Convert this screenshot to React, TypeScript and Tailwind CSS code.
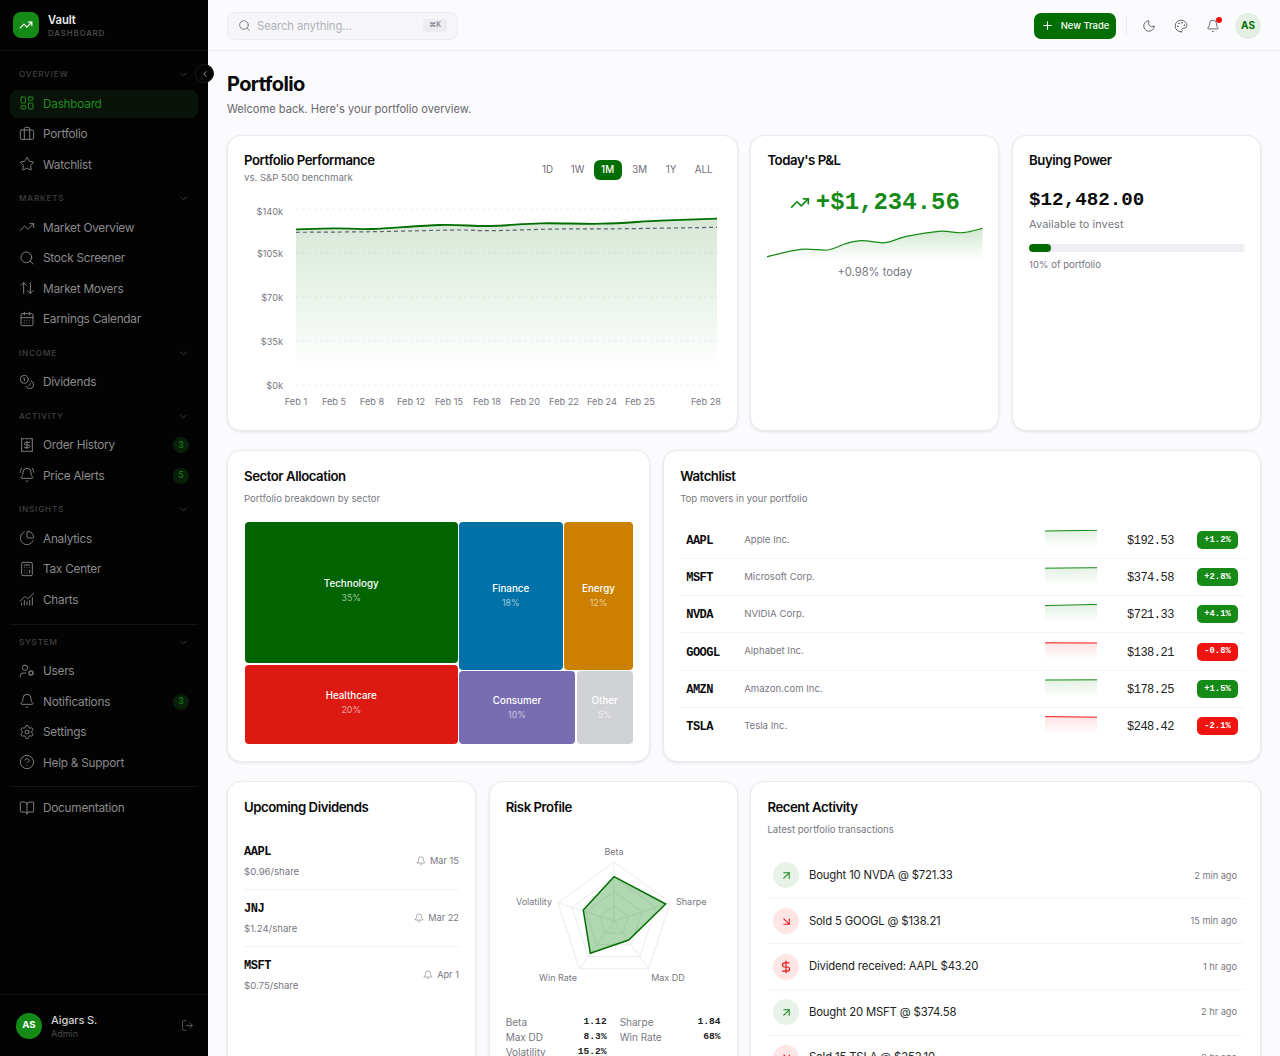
import {
  ArrowDownRight,
  ArrowUpDown,
  ArrowUpRight,
  Bell,
  BellRing,
  BookOpen,
  Briefcase,
  Calculator,
  CalendarDays,
  ChartNoAxesCombined,
  ChartPie,
  ChevronDown,
  ChevronLeft,
  CircleHelp,
  Coins,
  DollarSign,
  LayoutDashboard,
  LogOut,
  Moon,
  Palette,
  Plus,
  Receipt,
  Search,
  Settings,
  Star,
  TrendingUp,
  UserCog,
} from "lucide-react";
import type { ReactNode } from "react";

type Pt = [number, number];

const mono = "[font-family:'Liberation_Mono',monospace]";

// catmull-rom line through page-coordinate points
const smooth = (pts: Pt[]) =>
  pts
    .map((p, i) => {
      if (i === 0) return `M${p[0]} ${p[1]}`;
      const p0 = pts[i - 2] ?? pts[i - 1];
      const p1 = pts[i - 1];
      const p3 = pts[i + 1] ?? p;
      const c1x = p1[0] + (p[0] - p0[0]) / 6;
      const c1y = p1[1] + (p[1] - p0[1]) / 6;
      const c2x = p[0] - (p3[0] - p1[0]) / 6;
      const c2y = p[1] - (p3[1] - p1[1]) / 6;
      return `C${c1x} ${c1y} ${c2x} ${c2y} ${p[0]} ${p[1]}`;
    })
    .join(" ");

const navSections = [
  {
    title: "OVERVIEW",
    items: [
      { label: "Dashboard", icon: LayoutDashboard, active: true },
      { label: "Portfolio", icon: Briefcase },
      { label: "Watchlist", icon: Star },
    ],
  },
  {
    title: "MARKETS",
    items: [
      { label: "Market Overview", icon: TrendingUp },
      { label: "Stock Screener", icon: Search },
      { label: "Market Movers", icon: ArrowUpDown },
      { label: "Earnings Calendar", icon: CalendarDays },
    ],
  },
  { title: "INCOME", items: [{ label: "Dividends", icon: Coins }] },
  {
    title: "ACTIVITY",
    items: [
      { label: "Order History", icon: Receipt, badge: "3" },
      { label: "Price Alerts", icon: BellRing, badge: "5" },
    ],
  },
  {
    title: "INSIGHTS",
    items: [
      { label: "Analytics", icon: ChartPie },
      { label: "Tax Center", icon: Calculator },
      { label: "Charts", icon: ChartNoAxesCombined },
    ],
  },
];

const systemItems = [
  { label: "Users", icon: UserCog },
  { label: "Notifications", icon: Bell, badge: "3" },
  { label: "Settings", icon: Settings },
  { label: "Help & Support", icon: CircleHelp },
];

const NavItem = ({ item }: { item: any }) => {
  const Icon = item.icon;
  return (
    <div
      className={`flex h-[28.5px] items-center gap-2 rounded-lg pl-[9px] pr-[9px] text-[11.8px] ${
        item.active ? "bg-[#0a130a] text-[#1c8c1c]" : "text-[#8a8a8a]"
      }`}
    >
      <Icon size={16} strokeWidth={1.5} className={`-mt-[1px] ${item.active ? "text-[#1c8c1c]" : "text-[#7e7e7e]"}`} />
      <span className="flex-1 pt-[2px] tracking-[-0.25px]">{item.label}</span>
      {item.badge && (
        <span className="flex h-4 w-4 items-center justify-center rounded-full bg-[#0a1f0a] text-[8.5px] font-semibold text-[#167516]">
          {item.badge}
        </span>
      )}
    </div>
  );
};

const SectionHeader = ({ title }: { title: string }) => (
  <div className="flex h-4 items-center justify-between pl-[9px] pr-[9px]">
    <span className="text-[8.2px] font-medium tracking-[0.8px] text-[#404040]">{title}</span>
    <ChevronDown size={11} className="text-[#404040]" />
  </div>
);

const Sidebar = () => (
  <aside className="relative flex h-full w-[208px] shrink-0 flex-col bg-[#030303]">
    <div className="flex h-[51px] items-center gap-[9px] border-b border-[#111111] pl-[13px]">
      <div className="flex h-[26px] w-[26px] items-center justify-center rounded-lg bg-[#168a16]">
        <TrendingUp size={14} className="text-white" />
      </div>
      <div className="pt-[2px]">
        <div className="text-[11.2px] font-semibold leading-[14px] text-[#eeeeee]">Vault</div>
        <div className="text-[8px] font-medium leading-[12px] tracking-[0.8px] text-[#505050]">DASHBOARD</div>
      </div>
    </div>
    <div className="absolute left-[195px] top-[64px] flex h-[19px] w-[19px] items-center justify-center rounded-full border border-[#1a1a1a] bg-[#030303]">
      <ChevronLeft size={10} className="text-[#b0b0b0]" />
    </div>
    <nav className="flex flex-1 flex-col px-[10px] pt-[15.5px]">
      <div className="flex flex-col gap-[11.5px]">
        {navSections.map((s) => (
          <div key={s.title}>
            <SectionHeader title={s.title} />
            <div className="mt-[7px] flex flex-col gap-[2px]">
              {s.items.map((i) => (
                <NavItem key={i.label} item={i} />
              ))}
            </div>
          </div>
        ))}
      </div>
      <div className="my-[9.5px] h-px bg-[#141414]" />
      <SectionHeader title="SYSTEM" />
      <div className="mt-[7px] flex flex-col gap-[2px]">
        {systemItems.map((i) => (
          <NavItem key={i.label} item={i} />
        ))}
      </div>
      <div className="mb-[7px] mt-[9px] h-px bg-[#141414]" />
      <NavItem item={{ label: "Documentation", icon: BookOpen }} />
    </nav>
    <div className="flex h-[62px] items-center gap-[9px] border-t border-[#111111] pl-4 pr-[14px]">
      <div className="flex h-[26px] w-[26px] items-center justify-center rounded-full bg-[#168a16] text-[9.6px] font-bold text-white">
        AS
      </div>
      <div className="flex-1 pt-[1px]">
        <div className="text-[11px] font-medium leading-[15px] tracking-[-0.1px] text-[#d0d0d0]">Aigars S.</div>
        <div className="text-[9px] leading-[12px] text-[#4a4a4a]">Admin</div>
      </div>
      <LogOut size={13} strokeWidth={1.5} className="text-[#666666]" />
    </div>
  </aside>
);

const Topbar = () => (
  <header className="flex h-[51px] shrink-0 items-center border-b border-[#ececf0] bg-[#fbfbfd] pl-[19px] pr-[19px] pt-[1px]">
    <div className="flex h-[28px] w-[231px] items-center rounded-lg border border-[#ebebf0] bg-[#f6f6f9] pl-[10px] pr-[10px]">
      <Search size={13} strokeWidth={1.5} className="text-[#6b6b73]" />
      <span className="ml-[6px] flex-1 pt-[2px] text-[11.3px] tracking-[-0.1px] text-[#b0b0b8]">Search anything...</span>
      <span className="rounded bg-[#ececf1] px-[6px] py-[1px] text-[7px] font-medium text-[#77777f]">⌘K</span>
    </div>
    <div className="flex-1" />
    <button className="flex h-[26px] w-[82px] items-center justify-center gap-[7px] rounded-[7px] bg-[#006e00] text-[9.4px] font-medium text-white">
      <Plus size={13} />
      <span className="pt-[2px]">New Trade</span>
    </button>
    <div className="ml-[10px] h-5 w-px bg-[#ececf0]" />
    <div className="ml-[15px] flex items-center gap-[18px] text-[#55555c]">
      <Moon size={14} strokeWidth={1.5} />
      <Palette size={14} strokeWidth={1.5} />
      <div className="relative">
        <Bell size={14} strokeWidth={1.5} />
        <span className="absolute -right-[2px] -top-[2px] h-[6px] w-[6px] rounded-full bg-[#f01010]" />
      </div>
    </div>
    <div className="ml-[15px] flex h-[26px] w-[26px] items-center justify-center rounded-full bg-[#e5f0e5] text-[10px] font-bold text-[#006e00]">
      AS
    </div>
  </header>
);

const Card = ({ className, children }: { className: string; children: ReactNode }) => (
  <div className={`rounded-[14px] border border-[#ebebef] bg-white p-4 shadow-[0_1px_3px_rgba(20,20,40,0.1)] ${className}`}>
    {children}
  </div>
);

const CardTitle = ({ children }: { children: ReactNode }) => (
  <h3 className="text-[13.2px] font-semibold leading-[16px] tracking-[-0.45px] text-[#0a0a0a]">{children}</h3>
);

const ticks = [
  ["Feb 1", 296],
  ["Feb 5", 334],
  ["Feb 8", 372],
  ["Feb 12", 411],
  ["Feb 15", 449],
  ["Feb 18", 487],
  ["Feb 20", 525],
  ["Feb 22", 564],
  ["Feb 24", 602],
  ["Feb 25", 640],
  ["Feb 28", 706],
] as const;

const perfLine: Pt[] = [[296, 229.3], [335, 228.3], [372, 229], [440, 225], [490, 226], [541, 223.3], [602, 223.7], [660, 220.7], [717, 218.7]];
const benchLine: Pt[] = [[296, 232.3], [372, 231.7], [457, 230], [490, 230.7], [558, 229], [625, 228.7], [717, 227.3]];

const PerformanceChart = () => (
  <svg viewBox="244 200 480 212" className="mt-[15px] block h-[212px] w-[480px] text-[9.2px]">
    <defs>
      <linearGradient id="perfFill" x1="0" y1="0" x2="0" y2="1">
        <stop offset="0%" stopColor="#006e00" stopOpacity={0.16} />
        <stop offset="92%" stopColor="#006e00" stopOpacity={0} />
      </linearGradient>
    </defs>
    {[209, 253, 297, 341, 385].map((y) => (
      <line key={y} x1={296} x2={721} y1={y} y2={y} stroke="#f0f0f3" strokeDasharray="3 3" />
    ))}
    <path d={`${smooth(perfLine)} L717 385 L296 385 Z`} fill="url(#perfFill)" />
    <path d={smooth(perfLine)} fill="none" stroke="#006e00" strokeWidth={1.8} />
    <path d={smooth(benchLine)} fill="none" stroke="#5f5f6e" strokeWidth={1.2} strokeDasharray="4 3" />
    {[["$140k", 215], ["$105k", 257], ["$70k", 301], ["$35k", 345], ["$0k", 389]].map(([t, y]) => (
      <text key={t} x={283} y={y} textAnchor="end" fill="#77777f">
        {t}
      </text>
    ))}
    {ticks.map(([t, x]) => (
      <text key={t} x={x} y={405} textAnchor="middle" fill="#77777f">
        {t}
      </text>
    ))}
  </svg>
);

const ranges = [
  { label: "1D", width: "w-[28px]" },
  { label: "1W", width: "w-[26px]" },
  { label: "1M", width: "w-[28px]" },
  { label: "3M", width: "w-[30px]" },
  { label: "1Y", width: "w-[27px]" },
  { label: "ALL", width: "w-[32px]" },
];

const PerformanceCard = () => (
  <Card className="col-span-6 h-[296px]">
    <div className="flex justify-between">
      <div>
        <CardTitle>Portfolio Performance</CardTitle>
        <p className="mt-[3px] text-[9.6px] leading-[14px] text-[#77777f]">vs. S&amp;P 500 benchmark</p>
      </div>
      <div className="mr-[1px] mt-[8px] flex h-[20px] gap-[3px]">
        {ranges.map((r) => (
          <span
            key={r.label}
            className={`flex items-center justify-center rounded-md pt-[1px] text-[9.8px] ${r.width} ${
              r.label === "1M" ? "bg-[#006e00] font-medium text-white" : "text-[#6f6f77]"
            }`}
          >
            {r.label}
          </span>
        ))}
      </div>
    </div>
    <PerformanceChart />
  </Card>
);

const pnlLine: Pt[] = [[767, 256.7], [800.7, 249.3], [827.8, 250], [844.7, 244], [861.6, 240.7], [885, 242.7], [905.5, 236.7], [939, 231.3], [963, 232.7], [982.6, 228.3]];

const PnlCard = () => (
  <Card className="col-span-3 h-[296px]">
    <CardTitle>Today's P&amp;L</CardTitle>
    <div className="mt-[18.5px] flex items-center justify-center gap-[6px] text-[#168a16]">
      <TrendingUp size={20} strokeWidth={2} />
      <span className={`${mono} text-[24px] font-bold leading-[32px]`}>+$1,234.56</span>
    </div>
    <svg viewBox="767 226 216 34" className="mt-[7.5px] block h-[34px] w-[216px]">
      <defs>
        <linearGradient id="pnlFill" x1="0" y1="0" x2="0" y2="1">
          <stop offset="0%" stopColor="#168a16" stopOpacity={0.2} />
          <stop offset="100%" stopColor="#168a16" stopOpacity={0} />
        </linearGradient>
      </defs>
      <path d={`${smooth(pnlLine)} L982.6 260 L767 260 Z`} fill="url(#pnlFill)" />
      <path d={smooth(pnlLine)} fill="none" stroke="#168a16" strokeWidth={1.2} />
    </svg>
    <p className="mt-[4px] text-center text-[11.2px] leading-[16px] text-[#77777f]">+0.98% today</p>
  </Card>
);

const BuyingCard = () => (
  <Card className="col-span-3 h-[296px]">
    <CardTitle>Buying Power</CardTitle>
    <div className={`${mono} mt-[19px] text-[19.2px] font-bold leading-[26px] text-[#0a0a0a]`}>$12,482.00</div>
    <p className="mt-[4px] text-[10.9px] leading-[14px] tracking-[0.1px] text-[#77777f]">Available to invest</p>
    <div className="mt-[13px] h-2 w-[216px] rounded-full bg-[#f0f0f4]">
      <div className="h-2 w-[22px] rounded-full bg-[#006e00]" />
    </div>
    <p className="mt-[5.5px] text-[9.6px] leading-[13px] text-[#77777f]">10% of portfolio</p>
  </Card>
);

const Cell = ({ name, pct, className }: { name: string; pct: string; className: string }) => (
  <div className={`flex flex-col items-center justify-center rounded-[4px] text-white ${className}`}>
    <span className="text-[9.8px] font-medium leading-[14px]">{name}</span>
    <span className="text-[8.8px] leading-[13px] opacity-60">{pct}</span>
  </div>
);

const SectorCard = () => (
  <Card className="col-span-5 h-[312px]">
    <div className="pt-[1px]">
      <CardTitle>Sector Allocation</CardTitle>
    </div>
    <p className="mt-[8px] text-[9.6px] leading-[14px] text-[#77777f]">Portfolio breakdown by sector</p>
    <div className="ml-[1px] mt-[16px] flex h-[222px] w-[388px] gap-[1.5px]">
      <div className="flex w-[212.5px] flex-col gap-[1.5px]">
        <Cell name="Technology" pct="35%" className="h-[141px] bg-[#006400] pb-[4px]" />
        <Cell name="Healthcare" pct="20%" className="flex-1 bg-[#dc1a12] pb-[4px]" />
      </div>
      <div className="flex flex-1 flex-col gap-[1.5px]">
        <div className="flex h-[147.5px] gap-[1.5px]">
          <Cell name="Finance" pct="18%" className="w-[103.5px] bg-[#0072a8]" />
          <Cell name="Energy" pct="12%" className="flex-1 bg-[#cc8000]" />
        </div>
        <div className="flex flex-1 gap-[1.5px]">
          <Cell name="Consumer" pct="10%" className="w-[116px] bg-[#776db0]" />
          <Cell name="Other" pct="5%" className="flex-1 bg-[#d1d2d6]" />
        </div>
      </div>
    </div>
  </Card>
);

const watchlist = [
  { sym: "AAPL", name: "Apple Inc.", price: "$192.53", chg: "+1.2%", up: true, y0: 1.0, y1: 0.3 },
  { sym: "MSFT", name: "Microsoft Corp.", price: "$374.58", chg: "+2.8%", up: true, y0: 1.2, y1: 0.7 },
  { sym: "NVDA", name: "NVIDIA Corp.", price: "$721.33", chg: "+4.1%", up: true, y0: 1.6, y1: 0.4 },
  { sym: "GOOGL", name: "Alphabet Inc.", price: "$138.21", chg: "-0.8%", up: false, y0: 0.8, y1: 1 },
  { sym: "AMZN", name: "Amazon.com Inc.", price: "$178.25", chg: "+1.5%", up: true, y0: 1, y1: 0.8 },
  { sym: "TSLA", name: "Tesla Inc.", price: "$248.42", chg: "-2.1%", up: false, y0: 0.6, y1: 1.2 },
];

const MiniSpark = ({ id, up, y0, y1 }: { id: string; up: boolean; y0: number; y1: number }) => {
  const color = up ? "#168a16" : "#f01414";
  return (
    <svg viewBox="0 0 52 18" className="mb-[2px] h-[18px] w-[52px]">
      <defs>
        <linearGradient id={id} x1="0" y1="0" x2="0" y2="1">
          <stop offset="0%" stopColor={color} stopOpacity={0.12} />
          <stop offset="100%" stopColor={color} stopOpacity={0} />
        </linearGradient>
      </defs>
      <path d={`M0 ${y0} L52 ${y1} L52 18 L0 18 Z`} fill={`url(#${id})`} />
      <path d={`M0 ${y0} L52 ${y1}`} fill="none" stroke={color} strokeWidth={1} />
    </svg>
  );
};

const WatchlistCard = () => (
  <Card className="col-span-7 h-[312px]">
    <div className="pt-[1px]">
      <CardTitle>Watchlist</CardTitle>
    </div>
    <p className="mt-[8px] text-[9.6px] leading-[14px] text-[#77777f]">Top movers in your portfolio</p>
    <div className="mt-[15.9px] flex flex-col">
      {watchlist.map((w, i) => (
        <div
          key={w.sym}
          className={`flex h-[37.2px] items-center px-[6px] ${i < watchlist.length - 1 ? "border-b border-[#f5f5f8]" : ""}`}
        >
          <span className={`${mono} w-[58px] pt-[2px] text-[12px] font-bold tracking-[-0.48px] text-[#0a0a0a]`}>{w.sym}</span>
          <span className="flex-1 text-[9.6px] text-[#77777f]">{w.name}</span>
          <MiniSpark id={`spark-${w.sym}`} up={w.up} y0={w.y0} y1={w.y1} />
          <span className={`${mono} w-[77px] pt-[2px] text-right text-[12px] tracking-[-0.48px] text-[#222222]`}>{w.price}</span>
          <span
            className={`${mono} ml-[23px] flex h-[18px] w-[41px] items-center justify-center rounded-[5px] pt-[1px] text-[8.8px] font-bold text-white ${
              w.up ? "bg-[#168a16]" : "bg-[#f01410]"
            }`}
          >
            {w.chg}
          </span>
        </div>
      ))}
    </div>
  </Card>
);

const dividends = [
  { sym: "AAPL", amount: "$0.96/share", date: "Mar 15" },
  { sym: "JNJ", amount: "$1.24/share", date: "Mar 22" },
  { sym: "MSFT", amount: "$0.75/share", date: "Apr 1" },
];

const DividendsCard = () => (
  <Card className="col-span-3 h-[400px]">
    <div className="pt-[1px]">
      <CardTitle>Upcoming Dividends</CardTitle>
    </div>
    <div className="mt-[18px] flex flex-col">
      {dividends.map((d, i) => (
        <div
          key={d.sym}
          className={`flex h-[57px] items-center justify-between border-b ${i < dividends.length - 1 ? "border-[#f3f3f6]" : "border-transparent"}`}
        >
          <div>
            <div className={`${mono} pt-[1px] text-[12px] font-bold leading-[14px] tracking-[-0.48px] text-[#0a0a0a]`}>{d.sym}</div>
            <div className="mt-[6px] text-[9.6px] leading-[13px] text-[#77777f]">{d.amount}</div>
          </div>
          <div className="flex items-center gap-[4px] text-[9.2px] text-[#77777f]">
            <Bell size={10} strokeWidth={1.5} />
            {d.date}
          </div>
        </div>
      ))}
    </div>
  </Card>
);

const radarAngles = [-90, -18, 54, 126, 198];
const ring = (r: number) =>
  radarAngles
    .map((a) => {
      const rad = (a * Math.PI) / 180;
      return `${613 + r * Math.cos(rad)},${921 + r * Math.sin(rad)}`;
    })
    .join(" ");

const RadarChart = () => (
  <svg viewBox="489 840 249 150" className="-mx-4 mt-[25px] block h-[150px] w-[249px] text-[9px]">
    {[59, 44, 29.5, 15].map((r) => (
      <polygon key={r} points={ring(r)} fill="none" stroke="#ebebf0" strokeWidth={1} />
    ))}
    {radarAngles.map((a) => {
      const rad = (a * Math.PI) / 180;
      return <line key={a} x1={613} y1={921} x2={613 + 59 * Math.cos(rad)} y2={921 + 59 * Math.sin(rad)} stroke="#ebebf0" />;
    })}
    <polygon
      points="613,876.7 664.7,904 627.7,940 589.3,953.3 582.3,910"
      fill="#168a16"
      fillOpacity={0.34}
      stroke="#006e00"
      strokeWidth={1.5}
    />
    <text x={613} y={855} textAnchor="middle" fill="#77777f">Beta</text>
    <text x={675} y={904.5} fill="#77777f">Sharpe</text>
    <text x={551} y={904.5} textAnchor="end" fill="#77777f">Volatility</text>
    <text x={557} y={980.5} textAnchor="middle" fill="#77777f">Win Rate</text>
    <text x={667} y={980.5} textAnchor="middle" fill="#77777f">Max DD</text>
  </svg>
);

const riskStats = [
  ["Beta", "1.12"],
  ["Sharpe", "1.84"],
  ["Max DD", "8.3%"],
  ["Win Rate", "68%"],
  ["Volatility", "15.2%"],
];

const RiskCard = () => (
  <Card className="col-span-3 h-[400px]">
    <div className="pt-[1px]">
      <CardTitle>Risk Profile</CardTitle>
    </div>
    <RadarChart />
    <div className="mt-[24.5px] grid grid-cols-2 gap-x-[13px]">
      {riskStats.map(([k, v]) => (
        <div key={k} className="flex h-[15px] items-center justify-between text-[10px]">
          <span className="text-[#77777f]">{k}</span>
          <span className={`${mono} text-[9.6px] font-semibold text-[#222222]`}>{v}</span>
        </div>
      ))}
    </div>
  </Card>
);

const activity = [
  { text: "Bought 10 NVDA @ $721.33", time: "2 min ago", kind: "buy" },
  { text: "Sold 5 GOOGL @ $138.21", time: "15 min ago", kind: "sell" },
  { text: "Dividend received: AAPL $43.20", time: "1 hr ago", kind: "div" },
  { text: "Bought 20 MSFT @ $374.58", time: "2 hr ago", kind: "buy" },
  { text: "Sold 15 TSLA @ $252.10", time: "3 hr ago", kind: "sell" },
];

const ActivityCard = () => (
  <Card className="col-span-6 h-[400px]">
    <div className="pt-[1px]">
      <CardTitle>Recent Activity</CardTitle>
    </div>
    <p className="mt-[8px] text-[9.6px] leading-[14px] text-[#77777f]">Latest portfolio transactions</p>
    <div className="mt-[16.2px] flex flex-col">
      {activity.map((a) => (
        <div key={a.text} className="flex h-[45.6px] items-center gap-[9.5px] border-b border-[#f6f6f8] pl-[6px] pr-[7px]">
          <div
            className={`flex h-[26px] w-[26px] items-center justify-center rounded-full ${
              a.kind === "buy" ? "bg-[#e8f2e8] text-[#168a16]" : "bg-[#fee6e6] text-[#f01414]"
            }`}
          >
            {a.kind === "buy" && <ArrowUpRight size={13} />}
            {a.kind === "sell" && <ArrowDownRight size={13} />}
            {a.kind === "div" && <DollarSign size={14} />}
          </div>
          <span className="flex-1 text-[11.3px] tracking-[-0.15px] text-[#222222]">{a.text}</span>
          <span className="text-[9.2px] text-[#77777f]">{a.time}</span>
        </div>
      ))}
    </div>
  </Card>
);

export default function App() {
  return (
    <div className="flex h-screen overflow-hidden bg-[#fbfbfd] [font-family:Inter,sans-serif]">
      <Sidebar />
      <div className="flex min-w-0 flex-1 flex-col">
        <Topbar />
        <main className="flex-1 overflow-hidden pl-[19px] pr-[19px]">
          <h1 className="mt-[20px] text-[20px] font-bold leading-[26px] tracking-[-0.6px] text-[#0a0a0a]">Portfolio</h1>
          <p className="mt-[3px] text-[11.1px] leading-[18px] text-[#66666e]">Welcome back. Here's your portfolio overview.</p>
          <div className="mt-[17px] grid grid-cols-12 gap-x-[12.8px] gap-y-[19px]">
            <PerformanceCard />
            <PnlCard />
            <BuyingCard />
            <SectorCard />
            <WatchlistCard />
            <DividendsCard />
            <RiskCard />
            <ActivityCard />
          </div>
        </main>
      </div>
    </div>
  );
}
